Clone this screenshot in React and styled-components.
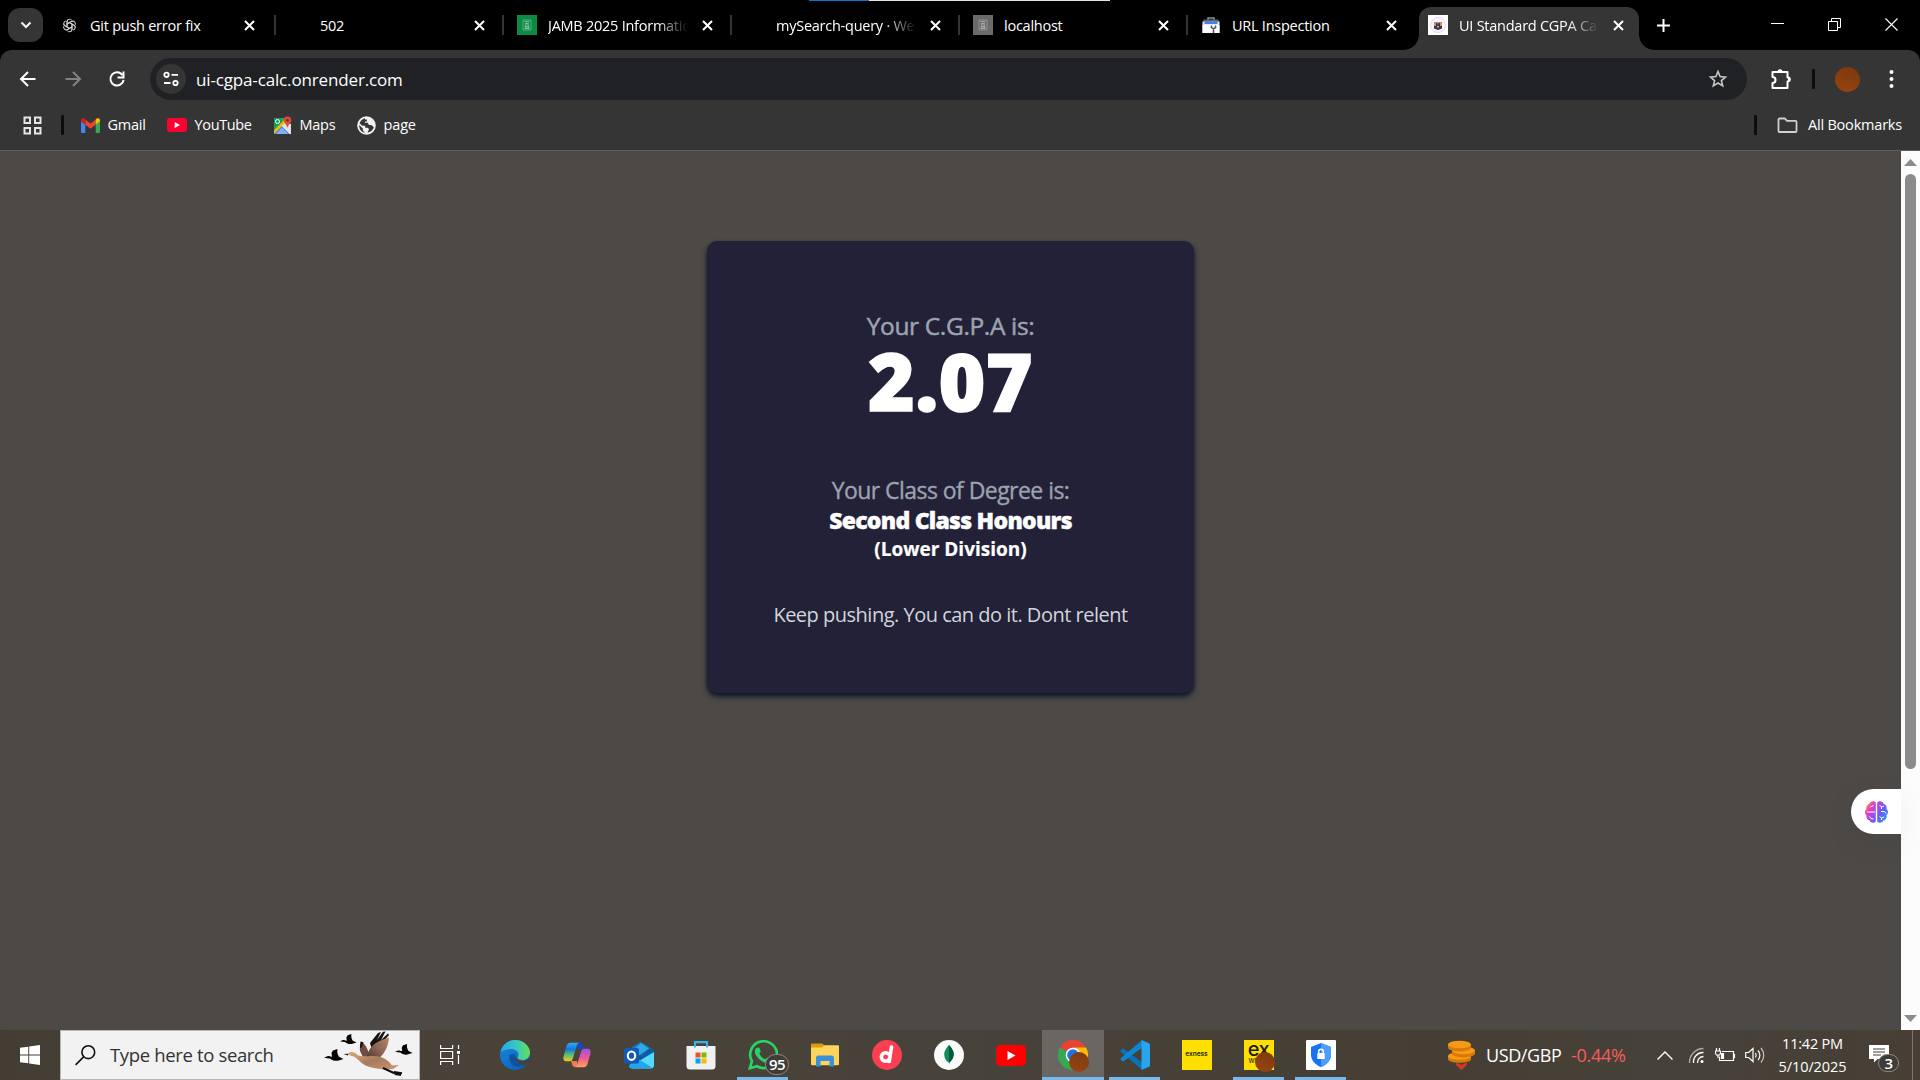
import React from "react";
import styled, { createGlobalStyle } from "styled-components";

const Global = createGlobalStyle`
  * { box-sizing: border-box; }
  html, body { margin: 0; padding: 0; background: #000; }
  body { font-family: "Open Sans", "Noto Sans", sans-serif; overflow: hidden; }
  svg { display: block; flex: none; }
`;

const Screen = styled.div`
  width: 1920px;
  height: 1080px;
  display: flex;
  flex-direction: column;
  overflow: hidden;
  background: #000;
`;

const Text = styled.span`
  font-size: ${(p) => p.$size || 15}px;
  letter-spacing: ${(p) => p.$track || 0}px;
  color: ${(p) => p.$color || "#fff"};
  line-height: 20px;
  white-space: nowrap;
`;

/* ---------- tab strip ---------- */
const TabStrip = styled.header`
  height: 50px;
  flex: none;
  display: flex;
  align-items: flex-start;
  padding: 7px 0 0 8px;
  position: relative;
  background: #000;
`;
const LoadBar = styled.div`
  position: absolute;
  top: 0;
  left: 809px;
  width: 301px;
  height: 1px;
  background: linear-gradient(90deg, #0078d4 60px, #e5e5e5 60px);
`;
const TabSearch = styled.div`
  width: 35px;
  height: 34px;
  margin: 1px 5px 0 0;
  border-radius: 12px;
  background: #353535;
  display: grid;
  place-items: center;
`;
const Tab = styled.div`
  width: ${(p) => (p.$active ? 220 : 228)}px;
  height: ${(p) => (p.$active ? 43 : 36)}px;
  margin-left: ${(p) => (p.$active ? 3 : 0)}px;
  padding-left: ${(p) => (p.$active ? 9 : p.$inset || 13)}px;
  display: flex;
  align-items: center;
  position: relative;
  background: ${(p) => (p.$active ? "#353535" : "transparent")};
  border-radius: 12px 12px 0 0;
  padding-bottom: ${(p) => (p.$active ? 7 : 0)}px;
  ${(p) =>
    p.$active &&
    `&::before, &::after {
      content: "";
      position: absolute;
      bottom: 0;
      width: 15px;
      height: 15px;
    }
    &::before { left: -15px; background: radial-gradient(circle at 0 0, transparent 14.5px, #353535 15px); }
    &::after { right: -15px; background: radial-gradient(circle at 100% 0, transparent 14.5px, #353535 15px); }`}
`;
const Favicon = styled.div`
  width: 20px;
  height: 20px;
  margin-right: 11px;
  display: grid;
  place-items: center;
  flex: none;
`;
const TabTitle = styled(Text)`
  width: 140px;
  flex: none;
  padding-top: 1px;
  overflow: hidden;
  ${(p) => p.$fade && "mask-image: linear-gradient(90deg, #000 108px, transparent 140px);"}
`;
const CloseSlot = styled.div`
  width: 14px;
  margin-left: 12px;
  flex: none;
  display: grid;
  place-items: center;
`;
const TabDivider = styled.div`
  width: 2px;
  height: 20px;
  margin-left: auto;
  background: #353535;
`;
const NewTab = styled.div`
  width: 20px;
  height: 36px;
  margin-left: 14px;
  display: grid;
  place-items: center;
`;
const WindowButtons = styled.div`
  margin-left: auto;
  padding-right: 22px;
  height: 35px;
  display: flex;
  align-items: center;
  gap: 44px;
`;

/* ---------- toolbar ---------- */
const Chrome = styled.div`
  height: 101px;
  flex: none;
  background: #353535;
  border-radius: 12px 12px 0 0;
  border-bottom: 1px solid #5e5e5e;
  padding-top: 8px;
`;
const Toolbar = styled.div`
  height: 42px;
  display: flex;
  align-items: center;
  padding: 0 24px 0 18px;
`;
const NavIcons = styled.div`
  width: 132px;
  display: flex;
  gap: 24.5px;
  align-items: center;
`;
const AddressBar = styled.div`
  width: 1597px;
  height: 42px;
  flex: none;
  border-radius: 21px;
  background: #202124;
  display: flex;
  align-items: center;
  padding: 0 19px 0 6px;
`;
const SiteChip = styled.div`
  width: 30px;
  height: 30px;
  border-radius: 50%;
  background: #353535;
  display: grid;
  place-items: center;
  margin-right: 10px;
`;
const Address = styled(Text)`
  padding-top: 1px;
`;
const Push = styled.div`
  margin-left: auto;
`;
const ToolbarEnd = styled.div`
  flex: 1;
  display: flex;
  align-items: center;
  gap: 20px;
  padding-left: 23px;
`;
const Separator = styled.div`
  width: 3px;
  height: 20px;
  flex: none;
  background: #0c0c0c;
  border-radius: 1px;
`;
const Avatar = styled.div`
  width: 25px;
  height: 25px;
  margin-right: 9px;
  border-radius: 50%;
  background: linear-gradient(200deg, #7c360f, #98450f);
`;
const Bookmarks = styled.div`
  height: 50px;
  display: flex;
  align-items: center;
  padding: 0 18px 0 22.5px;
`;
const Bookmark = styled.div`
  width: ${(p) => (p.$w ? `${p.$w}px` : "auto")};
  display: flex;
  align-items: center;
  gap: ${(p) => p.$gap || 8}px;
`;
const Gap = styled.div`
  width: ${(p) => p.$w}px;
  flex: none;
`;

/* ---------- page ---------- */
const Viewport = styled.main`
  height: 879px;
  flex: none;
  display: flex;
  position: relative;
  background: #4d4947;
`;
const Page = styled.div`
  flex: 1;
  display: flex;
  justify-content: center;
  align-items: flex-start;
  padding-top: 90px;
`;
const Card = styled.section`
  width: 487px;
  height: 452px;
  border-radius: 10px;
  background: #222138;
  box-shadow: 0 4px 6px -1px #0c1628, 0 2px 4px -1px #101a2c;
  display: flex;
  flex-direction: column;
  align-items: center;
  padding-top: 70px;
`;
const Line = styled.div`
  font-size: ${(p) => p.$size}px;
  font-weight: ${(p) => p.$weight || 400};
  color: ${(p) => p.$color || "#fff"};
  letter-spacing: ${(p) => p.$track || 0}px;
  -webkit-text-stroke: ${(p) => p.$thick || 0}px currentColor;
  height: ${(p) => p.$h}px;
  line-height: ${(p) => p.$h}px;
  margin-top: ${(p) => p.$top || 0}px;
  white-space: nowrap;
`;
const Scrollbar = styled.div`
  width: 19px;
  background: #fcfcfc;
  display: flex;
  flex-direction: column;
  align-items: center;
  padding: 8px 0 8px;
`;
const Thumb = styled.div`
  width: 11px;
  height: 595px;
  border-radius: 6px;
  background: #8b8b8b;
  margin: 8px 0 auto;
`;
const Assistant = styled.div`
  position: absolute;
  right: 19px;
  top: 638px;
  width: 50px;
  height: 45px;
  border-radius: 23px 0 0 23px;
  background: #fff;
  box-shadow: 0 8px 36px rgba(0, 0, 0, 0.06);
  display: flex;
  align-items: center;
  padding-left: 13px;
`;

/* ---------- taskbar ---------- */
const Taskbar = styled.footer`
  height: 50px;
  flex: none;
  display: flex;
  background: linear-gradient(90deg, #433d33, #4a4238 25%, #47423a 50%, #463e34 75%, #46423a 88%, #483e34);
`;
const Start = styled.div`
  width: 60px;
  display: grid;
  place-items: center;
`;
const Search = styled.div`
  width: 360px;
  border: 1px solid #b9b7b5;
  background: #f2f2f2;
  display: flex;
  align-items: center;
  padding: 0 4px 0 14px;
`;
const TaskView = styled.div`
  width: 63.5px;
  display: flex;
  align-items: center;
  padding-left: 20px;
`;
const AppSlot = styled.div`
  width: 62px;
  display: grid;
  place-items: center;
  position: relative;
  background: ${(p) => (p.$current ? "#6a6762" : "transparent")};
  &::after {
    content: "";
    display: ${(p) => (p.$open ? "block" : "none")};
    position: absolute;
    bottom: 0;
    left: ${(p) => (p.$current ? 0 : 5)}px;
    right: ${(p) => (p.$current ? 0 : 6)}px;
    height: 3px;
    background: #76b9ed;
  }
`;
const Badge = styled.span`
  position: absolute;
  left: ${(p) => p.$x}px;
  top: ${(p) => p.$y}px;
  width: ${(p) => p.$d}px;
  height: ${(p) => p.$d - 3}px;
  border: 1px solid #8c8985;
  border-radius: 12px;
  background: #3f3c38;
  color: #fff;
  font-size: 15px;
  font-weight: 600;
  letter-spacing: -0.6px;
  line-height: ${(p) => p.$d - 5}px;
  text-align: center;
`;
const ProfileDot = styled.span`
  position: absolute;
  left: 27px;
  top: 22px;
  width: 20px;
  height: 20px;
  border-radius: 50%;
  background: linear-gradient(200deg, #7c3a12, #98450f);
`;
const BrandTile = styled.div`
  width: 30px;
  height: 30px;
  background: #ffde02;
  color: #1a1a1a;
  overflow: hidden;
  font-family: "Inter", "Open Sans", sans-serif;
  font-weight: ${(p) => (p.$big ? 500 : 600)};
  font-size: ${(p) => (p.$big ? 20 : 6.5)}px;
  letter-spacing: ${(p) => (p.$big ? -0.5 : 0)}px;
  line-height: ${(p) => (p.$big ? 18 : 29)}px;
  text-align: center;
  small {
    display: block;
    font-size: 6px;
    line-height: 5px;
    letter-spacing: 0;
    text-align: left;
    padding-left: 5px;
  }
`;
const RoundLogo = styled.div`
  width: 30px;
  height: 30px;
  border-radius: 50%;
  background: ${(p) => p.$bg};
  display: grid;
  place-items: center;
`;
const Tray = styled.div`
  margin-left: auto;
  width: 473px;
  display: flex;
  align-items: center;
  position: relative;
`;
const TrayItem = styled.div`
  width: ${(p) => p.$w}px;
  display: flex;
  align-items: center;
  flex: none;
`;
const Clock = styled.div`
  width: 89px;
  display: flex;
  flex-direction: column;
  align-items: center;
  gap: 3px;
  flex: none;
  padding: 1px 0 0 2px;
`;
const Notifications = styled.div`
  width: 57px;
  height: 50px;
  position: relative;
  padding: 15px 0 0 13px;
  border-right: 1px solid #7c7872;
`;

/* ---------- drawings ---------- */
const Stroke = ({ w, h = w, box, color = "#fff", sw = 2, children }) => (
  <svg width={w} height={h} viewBox={box || `0 0 ${w} ${h}`} fill="none" stroke={color} strokeWidth={sw}>
    {children}
  </svg>
);
const CloseX = () => (
  <Stroke w={11}><path d="M1 1l9 9M10 1l-9 9" /></Stroke>
);
const Knot = () => (
  <Stroke w={15} box="0 0 24 24" color="#d8d8d8" sw={1.5}>
    {[0, 60, 120, 180, 240, 300].map((a) => (
      <path key={a} transform={`rotate(${a} 12 12)`} d="M8 15V6.200a4.300 4.300 0 0 1 7.600-2.700M8 9.700l7.500-4.300a4.400 4.400 0 0 1 4 0" />
    ))}
  </Stroke>
);
const Seal = ({ bg, fg }) => (
  <svg width="20" height="20" viewBox="0 0 20 20">
    <path fill={bg} d="M0 0h20v20H0z" />
    <path d="M6 5h8v10H6z" fill="none" stroke={fg} strokeWidth=".7" opacity=".5" />
    <path opacity=".85" d="M7.500 6.500h5M8 8l4 1.500M12 8L8 9.500M7.500 11h5M8.500 11v2.500M10 11v2.500M11.500 11v2.500M7.500 13.500h5" stroke={fg} strokeWidth=".6" />
  </svg>
);
const Toolbox = () => (
  <svg width="18" height="18" viewBox="0 0 18 18">
    <path d="M6 4V2h6v2" fill="none" stroke="#8b8f94" strokeWidth="1.6" />
    <path fill="#5c6065" d="M2 3.500h14l1.500 2h-17z" />
    <path fill="#e9edf2" d="M.5 5.500h17V17H.5z" />
    <path fill="#3f82f0" d="M2.500 5.500h13V8h-13z" />
    <path fill="#fff" d="M.5 9h17v8H.5z" />
    <path fill="none" stroke="#505458" strokeWidth="1.600" d="M9.500 9.500v2l2 1.300 2-1.300v-2M11.500 12.500V17" />
  </svg>
);
const Crest = () => (
  <svg width="20" height="20" viewBox="0 0 20 20">
    <path fill="#fff" d="M0 0h20v20H0z" />
    <circle cx="10" cy="10" r="7.500" fill="#fbf3fb" stroke="#ead6f0" />
    <path fill="#3a3350" d="M6 7.500h8v6L10 15l-4-1.500z" />
    <path fill="#c79a4c" d="M6 8h2v3H6zM12 8h2v3h-2z" />
    <path fill="#a35a48" d="M9 8h2v1.500H9z" />
    <path fill="#d9b08c" d="M9 11h2v1.500H9z" />
  </svg>
);
const Back = ({ color, flip }) => (
  <Stroke w={20} color={color}>
    <g transform={flip ? "translate(20 0) scale(-1 1)" : undefined}><path d="M17.500 10H3M10 3l-7 7 7 7" /></g>
  </Stroke>
);
const Reload = () => (
  <Stroke w={20}><path d="M15.500 6.200A6.600 6.600 0 1 0 16.600 10.800" /><path d="M16.500 2.500v6h-6" /></Stroke>
);
const Tune = () => (
  <Stroke w={18} sw={1.8}><circle cx="4.500" cy="4.800" r="2.200" /><path d="M9.500 4.800H16M2 13h6.500" /><circle cx="13.500" cy="13" r="2.200" /></Stroke>
);
const Star = () => (
  <Stroke w={20} color="#c7c7c7" sw={1.6}><path strokeLinejoin="miter" d="M10 2.600l2.100 5 5.400.5-4.100 3.500 1.300 5.300-4.700-2.900-4.700 2.900 1.300-5.300L2.500 8.100l5.400-.5z" /></Stroke>
);
const Puzzle = () => (
  <svg width="22" height="22" viewBox="0 0 22 22">
    <path fill="none" stroke="#fff" strokeWidth="2" strokeLinejoin="round" d="M2.500 4h15v5.500a2 2 0 0 1 0 4V20h-15v-5a3 3 0 0 0 0-6z" />
    <path fill="#fff" d="M7.500 4a2.500 2.700 0 0 1 5 0zM18 8.500a2.700 2.700 0 0 1 0 5.400z" />
  </svg>
);
const Dots = () => (
  <svg width="5" height="20" viewBox="0 0 5 20" fill="#fff"><circle cx="2.500" cy="3" r="2" /><circle cx="2.500" cy="10" r="2" /><circle cx="2.500" cy="17" r="2" /></svg>
);
const Grid = () => (
  <Stroke w={19} color="#e6e6e6"><path d="M1.500 1.500h5.500v5.500H1.500zM12 1.500h5.500v5.500H12zM1.500 12h5.500v5.500H1.500zM12 12h5.500v5.500H12z" /></Stroke>
);
const Gmail = () => (
  <svg width="19" height="15" viewBox="0 0 19 15">
    <path fill="#4285f4" d="M0 3l4.300 3.200V15H1.300A1.300 1.300 0 0 1 0 13.700z" />
    <path fill="#34a853" d="M19 3l-4.300 3.200V15h3a1.300 1.300 0 0 0 1.300-1.300z" />
    <path fill="#ea4335" d="M4.300 1.600L9.500 5.600l5.200-4v5.200l-5.200 4-5.200-4z" />
    <path fill="#c5221f" d="M0 3V2A2 2 0 0 1 3.200.600l1.100 1v5L0 3.600z" />
    <path fill="#fbbc04" d="M19 3V2A2 2 0 0 0 15.800.600l-1.100 1v5L19 3.600z" />
  </svg>
);
const Youtube = ({ w = 20, color = "#ff0033" }) => (
  <svg width={w} height={w * 0.7} viewBox="0 0 30 21">
    <rect width="30" height="21" rx="4.500" fill={color} /><path fill="#fff" d="M11.500 6v9l8-4.500z" />
  </svg>
);
const MapsIcon = () => (
  <svg width="19" height="19" viewBox="0 0 19 19">
    <path fill="#34a853" d="M1 2h13L2 17H1z" /><path fill="#1a9d5c" d="M1 2h8v6L1 12z" />
    <path fill="#dfe3e8" d="M8 10l8 8h2V8l-6-2z" /><path fill="#4285f4" d="M1 17.500L8.500 10l8 8H2z" />
    <path fill="#fbbc04" d="M1 14.500L12 3l2 2L1 18z" /><path fill="#fff" d="M3 18l6-6.500 6 6.500z" opacity=".35" />
    <circle cx="4.500" cy="5.500" r="2" fill="none" stroke="#fff" />
    <path fill="#dd4b3e" d="M14.500.5A3.800 3.800 0 0 1 18.300 4.300C18.300 7 15.500 8 14.500 12 13.500 8 10.700 7 10.700 4.300A3.800 3.800 0 0 1 14.500.5z" />
    <circle cx="14.500" cy="4.200" r="1.300" fill="#8c2018" />
  </svg>
);
const Globe = () => (
  <svg width="19" height="19" viewBox="0 0 19 19">
    <circle cx="9.500" cy="9.500" r="9.300" fill="#f1f1f1" />
    <path fill="#353535" d="M8 2.200c-2.500.7-4.600 2.400-5.400 5l2.600 2.600h3v2h2.400l1.500 1.200-1.600 3.600c3.200-.4 5.600-2.400 6.300-5.300l-2-2-3.100-.6-.8-1.900h-3V5.500h2V3.600H8z" />
    <path fill="#353535" d="M2.200 9l3.600 3.500v2l2.200 2.300C4.500 16.300 2 13.200 2.200 9z" />
  </svg>
);
const Folder = () => (
  <Stroke w={21} h={16} color="#d0d0d0" sw={1.8}><path strokeLinejoin="round" d="M1.500 2.500a1 1 0 0 1 1-1H8l2 2.300h8.500a1 1 0 0 1 1 1V14a1 1 0 0 1-1 1h-16a1 1 0 0 1-1-1z" /></Stroke>
);
const Arrow = ({ down }) => (
  <svg width="13" height="7" viewBox="0 0 13 7"><path fill="#8b8b8b" d={down ? "M0 0h13L6.500 7z" : "M0 7h13L6.500 0z"} /></svg>
);
const Brain = () => (
  <svg width="25" height="24" viewBox="0 0 25 24">
    <defs>
      <linearGradient id="brainL" x1="0" y1="0" x2=".7" y2="1"><stop offset="0" stopColor="#ff9a2e" /><stop offset=".18" stopColor="#ff8a3c" /><stop offset=".45" stopColor="#e93bc8" /><stop offset="1" stopColor="#6b5cff" /></linearGradient>
      <linearGradient id="brainR" x1="0" y1="0" x2=".8" y2="1"><stop offset="0" stopColor="#c441e0" /><stop offset=".5" stopColor="#6a5bf5" /><stop offset="1" stopColor="#21a0ff" /></linearGradient>
    </defs>
    <path fill="url(#brainL)" d="M11.800 2.500v19C10 23.500 6.500 23 5.600 20.500 3 20 1.800 17.500 2.600 15.500.3 13.500.6 10.500 2.300 9.300 1.800 6.300 3.500 4.500 5.200 4 6.300.800 10 .300 11.800 2.500z" />
    <path fill="url(#brainR)" d="M13.200 2.500v19c1.800 2 5.300 1.500 6.200-1 2.600-.5 3.800-3 3-5 2.300-2 2-5 .3-6.200.5-3-1.200-4.800-2.900-5.300C18.700.800 15 .300 13.200 2.500z" />
    <path fill="none" stroke="#fff" strokeWidth="1" d="M9.500 5.500L6.500 7M3 12h8M5.500 16.500l1.500 2 2.500.5M15.500 5l2 2 2.500-1M17.500 7v2M17 11.500h3.500l1.500 2M15.500 16.500l2 1.500 2.500-1M17.500 18v2" />
  </svg>
);
const WinLogo = () => (
  <svg width="20" height="20" viewBox="0 0 20 20" fill="#fff"><path d="M0 2.800L8.300 1.700v7.800H0zM9.200 1.500L20 0v9.500H9.200zM0 10.500h8.300v7.800L0 17.200zM9.200 10.500H20V20L9.200 18.500z" /></svg>
);
const Magnifier = () => (
  <Stroke w={21} color="#111" sw={1.6}><circle cx="13.300" cy="7.200" r="6.400" /><path d="M8.600 11.900L.600 19.900" /></Stroke>
);
const Duck = ({ x, y, s = 1 }) => (
  <path transform={`translate(${x} ${y}) scale(${s})`} fill="#050505" d="M0 8.500l3.500-1.300c1.300-.5 2.500.8 4.500.6L7.500 4 9 1.500 13.500 0c-.8 3 .2 5.500 1.500 7.800L19.500 10l-4 1.200c-3 1.200-7 .8-9.500-1.700L3 9.200z" />
);
const Birds = () => (
  <svg width="92" height="48" viewBox="0 0 92 48">
    <defs>
      <linearGradient id="gooseBody" x1="0" y1="0" x2="1" y2="1"><stop offset="0" stopColor="#e0a878" /><stop offset=".5" stopColor="#a77a5e" /><stop offset="1" stopColor="#cf9670" /></linearGradient>
      <linearGradient id="gooseWing" x1="0" y1="1" x2="1" y2="0"><stop offset="0" stopColor="#4d352e" /><stop offset=".5" stopColor="#8b6454" /><stop offset="1" stopColor="#b98466" /></linearGradient>
    </defs>
    <Duck x={1} y={18} s={1} /><Duck x={17} y={3} s={0.85} /><Duck x={72} y={13} s={0.9} />
    <path fill="#17110f" d="M47 12L55 2l3-1-4 8L60 .800l2.500-.3L58 9l7-6.500 1 1.500-8 9-9 6z" />
    <path fill="#6d4c42" d="M37 20c-.5-4 0-7 1.500-9.500 4 3 7 8 8 16L40 26z" />
    <path fill="#151010" d="M37 17l.5-6.500 3 1-2 5z" />
    <path fill="url(#gooseWing)" d="M44 27c0-9 8-16 16-18.500l6-2C65 18 60 25 53 29z" />
    <path fill="url(#gooseBody)" d="M25 22.500c3-2.500 7-1.500 9 1.200 4 2.500 10 1.500 16 1.300 10 0 16 5 19 9.500l7-.5-6 4c-12 1-26-.5-33-7.500-4-4-6-5.500-9-5.500z" />
    <path fill="#151010" d="M20.500 23l5-.3-.5 1.800z" />
    <path stroke="#151010" strokeWidth="2" fill="none" d="M60 37l12 5.500M71 41l8 1.200M72 43l6 1" />
  </svg>
);
const TaskViewIcon = () => (
  <svg width="21" height="20" viewBox="0 0 21 20" fill="none" stroke="#fff" strokeWidth="1.200"><path d="M.6 0v3.500h12V0M.6 6.500h12v7H.6zM.6 20v-3.500h12V20M18.500 0v4M18.500 10v9" /><path d="M17 6h3v2.800h-3z" fill="#fff" stroke="none" /></svg>
);
const Edge = () => (
  <svg width="30" height="30" viewBox="0 0 30 30">
    <defs>
      <linearGradient id="edgeTop" x1="0" y1=".5" x2="1" y2=".5"><stop offset="0" stopColor="#2aa6e8" /><stop offset=".5" stopColor="#37c6c4" /><stop offset="1" stopColor="#62e05a" /></linearGradient>
      <linearGradient id="edgeLow" x1="0" y1="0" x2=".6" y2="1"><stop offset="0" stopColor="#1a8bdc" /><stop offset="1" stopColor="#0c63bd" /></linearGradient>
    </defs>
    <circle cx="15" cy="15" r="15" fill="url(#edgeLow)" />
    <path fill="#474139" d="M18 19.500c4 2.500 8 1.500 10.500-1L30 18v2l-2.500 4C22 27 15 23 15 16z" />
    <path fill="#0f50a0" d="M10 14.500C7 24 16 30 26.500 24.800 20 26 13.500 22 15 14z" />
    <path fill="url(#edgeTop)" d="M.5 12C2 5 8 0 15 0c9 0 15 6.500 15 12.500 0 5-4 7.500-7.500 7.500-3.200 0-5-1.200-5-2 0-.7 1-1.200 1-3.500 0-3-3-5.500-7.500-5.500C5.500 9 2 11 .5 12z" />
  </svg>
);
const Copilot = () => (
  <svg width="28" height="26" viewBox="0 0 28 26">
    <defs>
      <linearGradient id="copA" x1="0" y1="0" x2="0" y2="1"><stop offset="0" stopColor="#29b2ea" /><stop offset=".35" stopColor="#1674e2" /><stop offset=".65" stopColor="#5bbd73" /><stop offset="1" stopColor="#f2cb19" /></linearGradient>
      <linearGradient id="copB" x1="0" y1="0" x2="0" y2="1"><stop offset="0" stopColor="#9554f0" /><stop offset=".5" stopColor="#f15594" /><stop offset="1" stopColor="#ffa35a" /></linearGradient>
    </defs>
    <path fill="#1747c7" d="M13 1h4.500c1.500 0 2 1 2.500 3l1 3h-6z" />
    <path fill="#f07a4f" d="M8 19h6l1 6h-3c-2 0-2.500-1-3-3z" />
    <path fill="url(#copA)" d="M7.500.8h9c-1.500 0-2.300 1.500-3 4L10 16c-.8 2.500-1.500 3.300-3.500 3.300H3C.8 19.300 0 17.500.5 14.500L3.500 4C4.300 1.800 5.500.8 7.500.8z" />
    <path fill="url(#copB)" d="M20.500 25.200h-9c1.500 0 2.300-1.500 3-4L18 10c.8-2.500 1.500-3.300 3.500-3.300H25c2.200 0 3 1.800 2.500 4.800L24.500 22c-.8 2.200-2 3.200-4 3.200z" />
  </svg>
);
const Outlook = () => (
  <svg width="30" height="27" viewBox="0 0 30 27">
    <path fill="#1b74cc" d="M5 7l11.500-7L29 7.500v6H5z" /><path fill="#2eaae8" d="M9 8L17 1l8 5.500L12 15z" />
    <path fill="#0c59a4" d="M14 17L26 6l4 2.500v3L17 21z" /><path fill="#54daff" d="M5 25l25-15v13a3.500 3.500 0 0 1-3.500 3.500H8z" />
    <path fill="#22a5ed" d="M6 22l9-4.500 13 8-1.500 1H8A3 3 0 0 1 5 24z" />
    <rect y="6" width="15" height="15.500" rx="1.800" fill="#0f5ab4" /><ellipse cx="7.500" cy="13.700" rx="3.700" ry="4.200" fill="none" stroke="#fff" strokeWidth="2.100" />
  </svg>
);
const Store = () => (
  <svg width="30" height="30" viewBox="0 0 30 30">
    <path fill="none" stroke="#30b6ea" strokeWidth="2.200" d="M9 7V2.200h12V7" /><path fill="#f1f1f1" d="M.5 6h29v20a3.500 3.500 0 0 1-3.500 3.500H4A3.500 3.500 0 0 1 .5 26z" />
    <path fill="none" stroke="#30b6ea" strokeWidth="1.800" d="M9 5v2.500M21 5v2.500" />
    <path fill="#f25022" d="M9.500 12.500h5v5h-5z" /><path fill="#7fba00" d="M15.500 12.500h5v5h-5z" /><path fill="#00a4ef" d="M9.500 18.500h5v5h-5z" /><path fill="#ffb900" d="M15.500 18.500h5v5h-5z" />
  </svg>
);
const Whatsapp = () => (
  <svg width="30" height="30" viewBox="0 0 30 30">
    <path fill="none" stroke="#25d366" strokeWidth="2.700" d="M1.900 28.200l2-7A13.400 13.400 0 1 1 9 26.300z" />
    <path fill="#25d366" d="M10.300 7.500c.8 0 1 .2 1.300 1l1.100 2.700c.2.700-1.300 2.100-1.300 2.500 1.500 2.900 3.500 4.500 6 5.500.6.100 1.500-1.900 2.100-1.800l3 1.500c.8.500-.2 3.500-2.500 3.900-3.500.8-9.500-2.500-12.500-8.500-1.200-2.500-.5-5.500 1.200-6.600z" />
  </svg>
);
const Explorer = () => (
  <svg width="28" height="24" viewBox="0 0 28 24">
    <path fill="#dc9b0c" d="M0 1.500A1 1 0 0 1 1 .500h10.500L13.500 3H27v8H0z" /><path fill="#ffd45c" d="M0 4.500h11l2-2.200h14a1 1 0 0 1 1 1V21a1.200 1.200 0 0 1-1.200 1.200H1.200A1.200 1.200 0 0 1 0 21z" />
    <path fill="#3b90d8" d="M7.500 12.500h13a2.500 2.500 0 0 1 2.500 2.500v8.500h-4.500V18h-9v5.500H5V15a2.500 2.500 0 0 1 2.500-2.500z" />
  </svg>
);
const DMark = () => (
  <Stroke w={30} sw={3.600}><path strokeLinecap="round" strokeLinejoin="round" d="M19.500 7l-2.300 14.500M17.500 18.500a4.200 4.200 0 1 1-1-4.600" /></Stroke>
);
const Leaf = () => (
  <svg width="12" height="20" viewBox="0 0 12 20"><path fill="#0b8f5a" d="M6 0c4 4.500 5 7 4.600 10.500C10.200 14 8 16 6.500 17.500h-1C3.500 16 1.500 14 1.300 10.500 1 7 2 4.500 6 0z" /><path fill="#07553a" d="M6 0c4 4.500 5 7 4.600 10.500C10.200 14 8 16 6.500 17.500L6 19.500z" /></svg>
);
const ChromeLogo = () => (
  <svg width="30" height="30" viewBox="0 0 30 30">
    <path fill="#ea4335" d="M15 15L2 7.500A15 15 0 0 1 28 7.500z" /><path fill="#fbbc04" d="M15 7.500h13A15 15 0 0 1 15 30l6.500-11.300z" /><path fill="#34a853" d="M2 7.500A15 15 0 0 0 15 30l6.500-11.200L15 15z" />
    <circle cx="15" cy="15" r="7.300" fill="#fff" /><circle cx="15" cy="15" r="5.800" fill="#1a73e8" />
  </svg>
);
const VsCode = () => (
  <svg width="30" height="30" viewBox="0 0 30 30">
    <path fill="#0a72b8" d="M.5 10.500L3 8.300l19 14V29.800L.7 11.800z" /><path fill="#0f86d2" d="M.5 19.500L3 21.700l19-14V.200L.7 18.200z" /><path fill="#29a5ef" d="M21.500 0L29 3.300q1 .5 1 1.500v20.400q0 1-1 1.500L21.500 30z" />
  </svg>
);
const ShieldApp = () => (
  <svg width="30" height="30" viewBox="0 0 30 30">
    <rect width="30" height="30" rx="1" fill="#fff" /><path fill="#1673f5" d="M15 3l10 4v7.500c0 6-4.500 10.500-10 12.500C9.500 25 5 20.500 5 14.500V7z" /><path fill="#4d9cff" d="M15 3l10 4v7.500c0 6-4.500 10.500-10 12.500z" />
    <path fill="#fff" d="M11.300 13h7.400v6h-7.400z" /><path fill="none" stroke="#fff" strokeWidth="1.500" d="M12.700 13.500v-2a2.300 2.300 0 0 1 4.600 0v2" />
  </svg>
);
const Coins = () => (
  <svg width="29" height="30" viewBox="0 0 29 30">
    {[[12.500, 16], [16.500, 10.500], [12.500, 4.500]].map(([x, y]) => (
      <g key={y}><path fill="#d97808" d={`M${x - 11.500} ${y}v3c0 5 23 5 23 0v-3z`} /><ellipse cx={x} cy={y} rx="11.500" ry="3.800" fill="#f59a17" /></g>
    ))}
    <path fill="#cf3d1c" d="M9 22.500l5.500 2.500 5.500-2.500v2.500L14.500 30 9 25z" />
  </svg>
);
const Wifi = () => (
  <Stroke w={17} sw={1.300}><circle cx="14" cy="14.500" r="1.500" fill="#fff" stroke="none" /><path d="M9.500 16A6 6 0 0 1 15.500 9.500M5.500 16A9.500 9.500 0 0 1 15.500 5.500" /><path opacity=".55" d="M1.500 16A14 14 0 0 1 15.500 1.500" /></Stroke>
);
const Battery = () => (
  <Stroke w={21} h={15} sw={1.200}><path d="M7 3.500h11.500v9H4.500V8.500" /><path d="M19.500 6v4" /><path d="M1.500 0v2.500M4.500 0v2.500M.5 3h5v2.500l-1 1.500h-3L.500 5.500zM3 7v3" /><path d="M6.500 5.500h2v5h-2z" fill="#fff" /></Stroke>
);
const Speaker = () => (
  <Stroke w={21} h={17} sw={1.200}><path d="M.7 5.500h3L8 1.500v13l-4.300-4h-3z" /><path d="M10.500 6a4 4 0 0 1 0 4.500M13 3.500a7 7 0 0 1 0 9.500" /><path opacity=".7" d="M16 1a11 11 0 0 1 0 14.500" /></Stroke>
);
const Note = () => (
  <svg width="21" height="18" viewBox="0 0 21 18"><path fill="#fff" d="M0 0h20v14H8.500L5 17.500V14H0z" /><path stroke="#463f36" strokeWidth="1.200" d="M4 4h12M4 7h12M4 10h8" /></svg>
);

const tabs = [
  { title: "Git push error fix", icon: <Knot />, inset: 11 },
  { title: "502" },
  { title: "JAMB 2025 Information", icon: <Seal bg="#0a8a43" fg="#d9f2e3" />, fade: true },
  { title: "mySearch-query  ·  Web", fade: true },
  { title: "localhost", icon: <Seal bg="#6a6a6a" fg="#dadada" /> },
  { title: "URL Inspection", icon: <Toolbox /> },
  { title: "UI Standard CGPA Calc", icon: <Crest />, fade: true, active: true },
];

const apps = [
  { icon: <Edge /> },
  { icon: <Copilot /> },
  { icon: <Outlook /> },
  { icon: <Store /> },
  { icon: <Whatsapp />, open: true, badge: "95" },
  { icon: <Explorer /> },
  { icon: <RoundLogo $bg="#fb3f50"><DMark /></RoundLogo> },
  { icon: <RoundLogo $bg="#fafafa"><Leaf /></RoundLogo> },
  { icon: <Youtube w={30} color="#ff0000" /> },
  { icon: <ChromeLogo />, open: true, current: true, profile: true },
  { icon: <VsCode />, open: true },
  { icon: <BrandTile>exness</BrandTile> },
  { icon: <BrandTile $big>ex<small>WD</small></BrandTile>, open: true, profile: true },
  { icon: <ShieldApp />, open: true },
];

export default function App() {
  return (
    <Screen>
      <Global />
      <TabStrip>
        <LoadBar />
        <TabSearch><Stroke w={12} h={8}><path d="M1.500 1.500L6 6l4.500-4.500" /></Stroke></TabSearch>
        {tabs.map((t) => (
          <Tab key={t.title} $active={t.active} $inset={t.inset}>
            <Favicon>{t.icon}</Favicon>
            <TabTitle $size={14.500} $track={-0.25} $fade={t.fade}>{t.title}</TabTitle>
            <CloseSlot><CloseX /></CloseSlot>
            {!t.active && t.title !== "URL Inspection" && <TabDivider />}
          </Tab>
        ))}
        <NewTab><Stroke w={13}><path d="M6.500 0v13M0 6.500h13" /></Stroke></NewTab>
        <WindowButtons>
          <Stroke w={13} sw={1}><path d="M0 5.500h13" /></Stroke>
          <Stroke w={13} sw={1}><path d="M.5 3.500h9v9h-9zM3.500 3V.5h9v9H10" /></Stroke>
          <Stroke w={13} sw={1.100}><path d="M.5.5l12 12M12.500.5l-12 12" /></Stroke>
        </WindowButtons>
      </TabStrip>

      <Chrome>
        <Toolbar>
          <NavIcons><Back color="#fff" /><Back color="#828282" flip /><Reload /></NavIcons>
          <AddressBar>
            <SiteChip><Tune /></SiteChip>
            <Address $size={17} $track={-0.15}>ui-cgpa-calc.onrender.com</Address>
            <Push><Star /></Push>
          </AddressBar>
          <ToolbarEnd><Puzzle /><Separator /><Avatar /><Dots /></ToolbarEnd>
        </Toolbar>
        <Bookmarks>
          <Bookmark $w={38}><Grid /></Bookmark>
          <Bookmark $w={20}><Separator /></Bookmark>
          <Bookmark $w={86}><Gmail /><Text $size={14.500} $track={-0.25}>Gmail</Text></Bookmark>
          <Bookmark $w={106}><Youtube /><Text $size={14.500} $track={-0.35}>YouTube</Text></Bookmark>
          <Bookmark $w={84}><MapsIcon /><Text $size={14.500} $track={-0.25}>Maps</Text></Bookmark>
          <Bookmark $w={80}><Globe /><Text $size={14.500} $track={-0.15}>page</Text></Bookmark>
          <Push><Bookmark $gap={10}><Separator /><Gap $w={0} /><Folder /><Text $size={14.500} $track={-0.2}>All Bookmarks</Text></Bookmark></Push>
        </Bookmarks>
      </Chrome>

      <Viewport>
        <Page>
          <Card>
            <Line $size={24.500} $thick={0.5} $track={-0.35} $h={30} $color="#9ca3af">Your C.G.P.A is:</Line>
            <Line $size={80} $weight={800} $thick={1.5} $track={0.3} $h={78}>2.07</Line>
            <Line $size={23} $thick={0.35} $track={-0.55} $h={29} $top={57} $color="#9ca3af">Your Class of Degree is:</Line>
            <Line $size={23} $weight={800} $thick={0.4} $track={-0.75} $h={30}>Second Class Honours</Line>
            <Line $size={19} $weight={700} $thick={0.2} $h={29}>(Lower Division)</Line>
            <Line $size={20} $track={-0.5} $h={30} $top={36} $color="#d1d5db">Keep pushing. You can do it. Dont relent</Line>
          </Card>
        </Page>
        <Scrollbar><Arrow /><Thumb /><Arrow down /></Scrollbar>
        <Assistant><Brain /></Assistant>
      </Viewport>

      <Taskbar>
        <Start><WinLogo /></Start>
        <Search>
          <Magnifier />
          <Gap $w={14} />
          <Text $size={18.500} $track={-0.35} $color="#333">Type here to search</Text>
          <Push><Birds /></Push>
        </Search>
        <TaskView><TaskViewIcon /></TaskView>
        {apps.map((a, i) => (
          <AppSlot key={i} $open={a.open} $current={a.current}>
            {a.icon}
            {a.badge && <Badge $x={33.500} $y={24} $d={24}>{a.badge}</Badge>}
            {a.profile && <ProfileDot />}
          </AppSlot>
        ))}
        <Tray>
          <TrayItem $w={39}><Coins /></TrayItem>
          <TrayItem $w={85}><Text $size={18} $track={-0.4}>USD/GBP</Text></TrayItem>
          <TrayItem $w={86}><Text $size={18} $track={-0.3} $color="#f65c5c">-0.44%</Text></TrayItem>
          <TrayItem $w={31}><Stroke w={16} h={9} sw={1.400}><path d="M.5 8.500L8 1l7.500 7.500" /></Stroke></TrayItem>
          <TrayItem $w={27}><Wifi /></TrayItem>
          <TrayItem $w={30}><Battery /></TrayItem>
          <TrayItem $w={22}><Speaker /></TrayItem>
          <Clock>
            <Text $size={14.500} $track={-0.2}>11:42 PM</Text>
            <Text $size={14.500} $track={-0.1}>5/10/2025</Text>
          </Clock>
          <Notifications><Note /><Badge $x={22} $y={24} $d={21}>3</Badge></Notifications>
        </Tray>
      </Taskbar>
    </Screen>
  );
}
